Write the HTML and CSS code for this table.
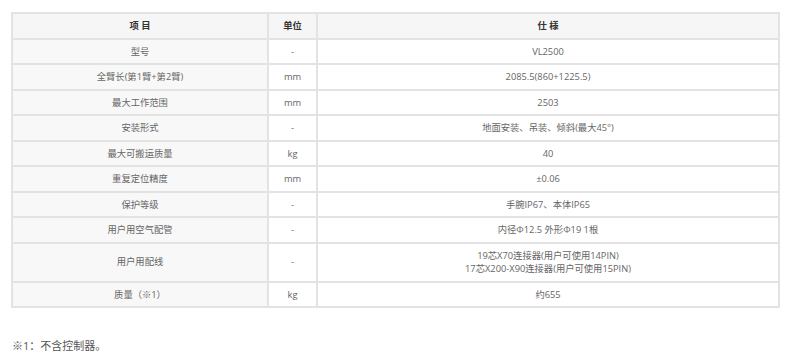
FILE: index.html
```html
<!DOCTYPE html>
<html lang="zh">
<head>
<meta charset="utf-8">
<link rel="stylesheet" href="styles.css">
</head>
<body>
<div class="page">
<table class="spec">
  <colgroup>
    <col class="c-item">
    <col class="c-unit">
    <col class="c-val">
  </colgroup>
  <thead>
    <tr><th>项 目</th><th>单位</th><th>仕 様</th></tr>
  </thead>
  <tbody>
    <tr><td class="name">型号</td><td>-</td><td>VL2500</td></tr>
    <tr><td class="name">全臂长(第1臂+第2臂)</td><td>mm</td><td>2085.5(860+1225.5)</td></tr>
    <tr><td class="name">最大工作范围</td><td>mm</td><td>2503</td></tr>
    <tr><td class="name">安装形式</td><td>-</td><td>地面安装、吊装、倾斜(最大45°)</td></tr>
    <tr><td class="name">最大可搬运质量</td><td>kg</td><td>40</td></tr>
    <tr><td class="name">重复定位精度</td><td>mm</td><td>±0.06</td></tr>
    <tr><td class="name">保护等级</td><td>-</td><td>手腕IP67、本体IP65</td></tr>
    <tr><td class="name">用户用空气配管</td><td>-</td><td>内径Φ12.5 外形Φ19 1根</td></tr>
    <tr><td class="name">用户用配线</td><td>-</td><td>19芯X70连接器(用户可使用14PIN)<br>17芯X200-X90连接器(用户可使用15PIN)</td></tr>
    <tr><td class="name">质量（※1）</td><td>kg</td><td>约655</td></tr>
  </tbody>
</table>
<p class="note">※1：不含控制器。</p>
</div>
</body>
</html>
```

FILE: styles.css
```css
html, body {
  margin: 0;
  padding: 0;
  background: #ffffff;
}
.page {
  padding: 12px 0 0 11px;
  font-family: "Open Sans", "Noto Sans CJK SC", sans-serif;
  color: #666666;
}
.spec {
  width: 769px;
  border-collapse: collapse;
  table-layout: fixed;
  font-size: 9.3px;
  line-height: 13.5px;
}
.c-item { width: 256px; }
.c-unit { width: 49px; }
.c-val { width: auto; }
.spec th,
.spec td {
  border: 2px solid #e3e3e3;
  padding: 5px 4px;
  text-align: center;
  vertical-align: middle;
  font-weight: normal;
}
.spec th {
  background: #f6f6f6;
  color: #333333;
  font-weight: bold;
}
.spec td.name {
  background: #f8f8f8;
}
.note {
  margin: 30px 0 0 1px;
  font-size: 11px;
  line-height: 16px;
  color: #555555;
}
```
